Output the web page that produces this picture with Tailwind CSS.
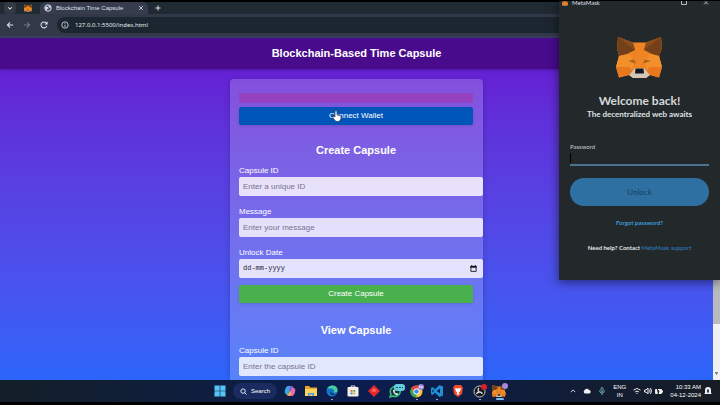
<!DOCTYPE html>
<html lang="en">
<head>
<meta charset="utf-8">
<title>Blockchain Time Capsule</title>
<script src="https://cdn.jsdelivr.net/npm/@tailwindcss/browser@4"></script>
</head>
<body class="relative flex h-screen flex-col overflow-hidden bg-black pt-0.5 pb-[3px] font-['Liberation_Sans',Arial,sans-serif] text-white">
<svg class="hidden" aria-hidden="true">
  <symbol id="fox" viewBox="0 0 47 43">
    <path fill="#ee8424" d="M2 1L17 6.500H30L45 1L46 12L43 20L46 31L43 41.500L34 39L30 42H17L13 39L3 41.500L0 31L3 20L1 12Z"/>
    <path fill="#74401a" d="M2 1L17 7L19 14L11 18L3 20L1 12ZM45 1L30 7L28 14L36 18L43 20L46 12Z"/>
    <path fill="#8d4c1b" d="M2 1L17 7L19 14ZM45 1L30 7L28 14Z"/>
    <path fill="#f4902c" d="M3 20L14 18L18 29L15 35L0 31ZM43 20L33 18L29 29L32 35L46 31Z"/>
    <path fill="#e8781e" d="M0 31L14 31L16 36L13 39L3 41.500ZM46 31L33 31L31 36L34 39L43 41.500Z"/>
    <path fill="#a9621f" d="M12 25L18 23.500L20 27.500ZM35 25L29 23.500L27 27.500Z"/>
    <path fill="#d5c5b5" d="M15 37L19 32H28L32 37L34 39L30 42H17L13 39Z"/>
    <path fill="#15171a" d="M19.500 32.500H27.500L28 37.500H19Z"/>
  </symbol>
</svg>

<header class="shrink-0 bg-[#1f2a33]">
  <div class="flex h-3 items-center">
    <button aria-label="Search tabs" class="ml-1 flex h-3 w-3 items-center justify-center rounded-sm bg-[#343946]"><svg class="h-1.5 w-1.5" viewBox="0 0 8 8" fill="none" stroke="#dfe3ea" stroke-width="1.400"><path d="M1.500 3L4 5.500L6.500 3"/></svg></button>
    <svg class="ml-2 h-2 w-2"><use href="#fox"/></svg>
    <div class="ml-2 flex h-full w-[108px] items-center rounded-t-md bg-[#363b4d] px-1">
      <svg class="h-2 w-2 shrink-0" viewBox="0 0 16 16"><circle cx="8" cy="8" r="6.500" fill="#4b5060" stroke="#d5d9e2" stroke-width="2"/><path fill="#d5d9e2" d="M2 5L8 6L9 9L6 10L6 14L3 11ZM9 2L14 6L11 8L9 5Z"/></svg>
      <span class="ml-1 flex-1 text-[6px] leading-[8px] whitespace-nowrap text-[#dfe2ea]">Blockchain Time Capsule</span>
      <button aria-label="Close tab" class="flex"><svg class="h-1.5 w-1.5" viewBox="0 0 8 8" stroke="#cfd3dc" stroke-width="1.200"><path d="M1.500 1.500L6.500 6.500M6.500 1.500L1.500 6.500"/></svg></button>
    </div>
    <button aria-label="New tab" class="ml-1.5 flex"><svg class="h-2 w-2" viewBox="0 0 8 8" stroke="#dfe3ea" stroke-width="1"><path d="M4 1.500V6.500M1.500 4H6.500"/></svg></button>
  </div>
  <div class="flex h-6 items-center gap-[9px] border-b-2 border-[#3b3d60] bg-[#333849] pl-1.5">
    <button aria-label="Back" class="flex"><svg class="h-2 w-2" viewBox="0 0 10 10" fill="none" stroke="#dfe3ea" stroke-width="1.300"><path d="M9 5H2M5 1.800L1.800 5L5 8.200"/></svg></button>
    <button aria-label="Forward" class="flex"><svg class="h-2 w-2" viewBox="0 0 10 10" fill="none" stroke="#767b8a" stroke-width="1.300"><path d="M1 5H8M5 1.800L8.200 5L5 8.200"/></svg></button>
    <button aria-label="Reload" class="flex"><svg class="h-2 w-2" viewBox="0 0 10 10" fill="none" stroke="#dfe3ea" stroke-width="1.300"><path d="M8.500 6A3.700 3.700 0 1 1 7.800 2.500L8.800 3.500M8.900 .8V3.700H6"/></svg></button>
    <div class="flex h-4 flex-1 items-center gap-1.5 rounded-l-full bg-[#1b2630] pl-1">
      <svg class="h-2 w-2" viewBox="0 0 10 10" fill="none" stroke="#dfe3ea"><circle cx="5" cy="5" r="4"/><path d="M5 4.500V7.500M5 2.500V3.500"/></svg>
      <input aria-label="Address" value="127.0.0.1:5500/index.html" class="w-48 bg-transparent font-['Noto_Sans',sans-serif] text-[6px] text-[#e4e7ed] outline-none">
    </div>
  </div>
</header>

<div class="flex min-h-0 flex-1">
  <div class="flex min-w-0 flex-1 flex-col overflow-hidden bg-linear-to-b from-[#6713d0] to-[#2b65fa]">
    <div class="flex h-[31px] shrink-0 items-center justify-center bg-[#470b8c] shadow-[0_1px_3px_#0004]">
      <h1 class="text-[11px] font-bold">Blockchain-Based Time Capsule</h1>
    </div>
    <main class="mx-auto mt-2.5 w-[253px] flex-1 shrink-0 rounded-t-sm bg-white/20 pt-3.5 pr-2.5 pl-[9px] shadow-[0_2px_6px_#0003]">
      <div class="h-2.5 bg-[#b02c9c]/45"></div>
      <button class="mt-1 block h-[18px] w-full rounded-xs bg-[#0056b8] text-[8px] shadow-sm">Connect Wallet</button>
      <form>
        <h2 class="mt-4 text-center text-[11px] leading-[18px] font-bold">Create Capsule</h2>
        <label for="cid" class="mt-1.5 block text-[8px] leading-3">Capsule ID</label>
        <input id="cid" placeholder="Enter a unique ID" class="block h-[19px] w-[calc(100%+10px)] rounded-xs bg-[#e7e1fc] px-1 text-[8px] text-black placeholder:text-[#77738a]">
        <label for="msg" class="mt-2.5 block text-[8px] leading-3">Message</label>
        <input id="msg" placeholder="Enter your message" class="block h-[19px] w-[calc(100%+10px)] rounded-xs bg-[#e5e1fc] px-1 text-[8px] text-black placeholder:text-[#77738a]">
        <label for="date" class="mt-2.5 block text-[8px] leading-3">Unlock Date</label>
        <div class="flex h-[19px] w-[calc(100%+10px)] items-center rounded-xs bg-[#e4e2fc] pr-1.5 pl-1">
          <input id="date" placeholder="dd-mm-yyyy" class="min-w-0 flex-1 bg-transparent font-['Liberation_Mono',monospace] text-[7px] text-black outline-none placeholder:text-[#25242c]">
          <button type="button" aria-label="Pick a date" class="flex"><svg class="h-[7px] w-[7px]" viewBox="0 0 8 8"><path fill="none" stroke="#15151c" d="M1 1.500H7V7.300H1Z"/><path fill="#15151c" d="M.5 1H7.500V3H.5ZM1.500 0H2.500V1H1.500ZM5.500 0H6.500V1H5.500Z"/></svg></button>
        </div>
        <button type="button" class="mt-[7px] block h-[18px] w-full rounded-xs bg-[#49b04e] text-[8px] shadow-sm">Create Capsule</button>
      </form>
      <form>
        <h2 class="mt-[18px] text-center text-[11px] leading-[18px] font-bold">View Capsule</h2>
        <label for="vid" class="mt-1.5 block text-[8px] leading-3">Capsule ID</label>
        <input id="vid" placeholder="Enter the capsule ID" class="block h-[19px] w-[calc(100%+10px)] rounded-xs bg-[#e1e7fd] px-1 text-[8px] text-black placeholder:text-[#77738a]">
      </form>
    </main>
  </div>
  <div class="flex w-[7px] flex-col bg-[#f1f1f3]">
    <div class="mt-24 h-[190px] bg-[#b9bac0]"></div>
    <svg class="mt-auto mb-1 h-1 w-full" viewBox="0 0 8 4"><path fill="#60636b" d="M2 0H6L4 3Z"/></svg>
  </div>
</div>

<footer class="grid h-[22px] shrink-0 grid-cols-[1fr_auto_1fr] items-center bg-linear-to-r from-[#141e28] via-[#0b1c50] to-[#161c24]">
  <div></div>
  <div class="flex items-center gap-[9px]">
    <button aria-label="Start" class="flex"><svg class="h-3 w-3" viewBox="0 0 12 12"><path fill="#55c5f5" d="M.5 .5H5.700V5.700H.5ZM6.300 .5H11.500V5.700H6.300ZM.5 6.300H5.700V11.500H.5ZM6.300 6.300H11.500V11.500H6.300Z"/></svg></button>
    <button class="-mx-0.5 flex h-4 w-11 items-center justify-center gap-1 rounded-full bg-[#1b2b60] text-[6px]"><svg class="h-[7px] w-[7px]" viewBox="0 0 8 8" fill="none" stroke="#fff"><circle cx="3.500" cy="3.500" r="2.500"/><path d="M5.500 5.500L7.500 7.500"/></svg>Search</button>
    <button aria-label="Copilot" class="flex"><svg class="h-3 w-3" viewBox="0 0 12 12"><path fill="#35a8e8" d="M4 1H7L5 8Q4 10 2 9Q0 8 1 5Q2 1 4 1Z"/><path fill="#e56bb0" d="M8 11H5L7 4Q8 2 10 3Q12 4 11 7Q10 11 8 11Z"/><path fill="#f4b64b" d="M2 9Q4 10 5 8L6 5L7.500 8L5.500 11Q3 11 2 9Z"/><path fill="#8d65e0" d="M7 1Q9 1 10 3Q8 2 7 4L6 6L5 3Z"/></svg></button>
    <button aria-label="File Explorer" class="flex"><svg class="h-3 w-3" viewBox="0 0 12 12"><path fill="#e5a52a" d="M0 1H4L5.500 2.500H12V5H0Z"/><path fill="#fbd45f" d="M0 4H12V11H0Z"/><path fill="#4a9bdc" d="M3 8H9V11H7.500V9.500H4.500V11H3Z"/></svg></button>
    <button aria-label="Edge" class="relative flex"><svg class="h-3 w-3" viewBox="0 0 12 12"><circle cx="6" cy="6" r="5.500" fill="#1677c8"/><path fill="#47cfa2" d="M1 4Q3 0 7 .5Q12 1 11.500 6Q11 8 8 7.500Q9 4 5.500 3.500Q3 3 1 4Z"/><path fill="#0b315f" d="M5 6Q5 9 10 9Q7 11 4.500 9Q3.500 7 5 6Z"/></svg><span class="absolute -bottom-[3px] left-[5px] h-px w-0.5 bg-[#9aa6c4]"></span></button>
    <button aria-label="Store" class="flex"><svg class="h-3 w-3" viewBox="0 0 12 12"><path fill="none" stroke="#dfe5ee" d="M4 3V1H8V3"/><rect x=".5" y="2" width="11" height="9.500" rx="1" fill="#f1f0e9"/><path fill="#e06b3b" d="M3.500 5H5.500V6.800H3.500Z"/><path fill="#66a744" d="M6.300 5H8.300V6.800H6.300Z"/><path fill="#3e86ce" d="M3.500 7.500H5.500V9.300H3.500Z"/><path fill="#dcae32" d="M6.300 7.500H8.300V9.300H6.300Z"/></svg></button>
    <button aria-label="Red diamond app" class="flex"><svg class="h-3 w-3" viewBox="0 0 12 12"><path fill="#e8282d" d="M6 0L12 6L6 12L0 6Z"/><path fill="#ff6462" d="M6 3L9 6L6 7L3 6Z"/></svg></button>
    <button aria-label="WhatsApp" class="flex"><svg class="h-3.5 w-4" viewBox="0 0 16 14"><path fill="#17323a" stroke="#35c47b" stroke-width="1.500" d="M6.500 2.500A5 5 0 1 1 4 12L1 13L2 10A5 5 0 0 1 6.500 2.500Z"/><path fill="#e6f5ee" d="M4 6L5.500 5.500L6 7L5.500 8L7 9.500L8 9L9.500 10Q8.500 11.500 7 11Q4 9.500 4 6Z"/><rect x="5" width="11" height="7" rx="3" fill="#65ccdc"/><path stroke="#14536e" d="M7 3.500H9M10 3.500H12M13 3.500H14"/></svg></button>
    <button aria-label="Chrome" class="relative -ml-1 flex"><svg class="h-3.5 w-3.5" viewBox="0 0 14 14"><circle cx="6.500" cy="7.500" r="6" fill="#f3c739"/><path fill="#e2463a" d="M1.300 4.500A6 6 0 0 1 11.700 4.500H6.500L4 9Z"/><path fill="#35a853" d="M1.300 4.500L4 9L6.500 10.500V13.500A6 6 0 0 1 1.300 4.500Z"/><circle cx="6.500" cy="7.500" r="2.700" fill="#4285f4" stroke="#fff"/><circle cx="11" cy="3" r="3" fill="#a987d9"/><path stroke="#fff" d="M9.800 2V4M12 2V4"/></svg><span class="absolute -bottom-0.5 left-1.5 h-px w-0.5 bg-[#9aa6c4]"></span></button>
    <button aria-label="Visual Studio Code" class="relative -ml-0.5 flex"><svg class="h-3 w-3" viewBox="0 0 12 12"><path fill="#1f8fd8" fill-rule="evenodd" d="M8.500 0L12 1.500V10.500L8.500 12L4 7.800L1.500 10L0 9V3L1.500 2L4 4.200ZM9 3.500L5.700 6L9 8.500ZM1.300 4.500V7.500L3 6Z"/></svg><span class="absolute -bottom-[3px] left-[5px] h-px w-0.5 bg-[#9aa6c4]"></span></button>
    <button aria-label="Brave" class="flex"><svg class="h-3 w-3" viewBox="0 0 12 12"><path fill="#ee4b2b" d="M3 0H9L11 2.500L10 9L6 12L2 9L1 2.500Z"/><path fill="#fff" d="M3 3L6 3.500L9 3L8 6.500L6.700 7.500L7.500 9L6 10L4.500 9L5.300 7.500L4 6.500Z"/></svg></button>
    <button aria-label="OBS Studio" class="relative flex"><svg class="h-3.5 w-3.5" viewBox="0 0 14 14"><circle cx="6.500" cy="7.500" r="5.500" fill="#15171b" stroke="#c9cbd1"/><path fill="none" stroke="#d9dbe0" stroke-width="1.300" d="M6 4Q4 6 6.500 8Q9 8 9 10M6.500 8Q4 8 3.500 10"/><circle cx="11" cy="3" r="3" fill="#d9202e"/></svg><span class="absolute -bottom-0.5 left-1.5 h-px w-0.5 bg-[#9aa6c4]"></span></button>
    <button aria-label="MetaMask" class="relative -ml-1 flex"><svg class="h-3.5 w-3.5"><use href="#fox"/></svg><span class="absolute -top-px -right-0.5 h-1.5 w-1.5 rounded-full bg-[#a987d9]"></span><span class="absolute -bottom-0.5 left-1 h-0.5 w-2 rounded-full bg-[#7fb8ea]"></span></button>
  </div>
  <div class="flex items-center justify-end gap-[7px] pr-2 text-[6px] leading-[8px]">
    <svg class="h-1.5 w-1.5" viewBox="0 0 8 8" fill="none" stroke="#e4e6ea" stroke-width="1.200"><path d="M1 5.500L4 2.500L7 5.500"/></svg>
    <svg class="h-2 w-2" viewBox="0 0 8 8"><path fill="#f0f1f3" d="M2 6.500A1.800 1.800 0 0 1 1.500 3.300A2.500 2.500 0 0 1 6 3A1.800 1.800 0 0 1 6.500 6.500Z"/></svg>
    <svg class="h-2 w-2" viewBox="0 0 8 8" fill="none" stroke="#68aaa4"><rect x="3" y=".5" width="2" height="4" rx="1"/><path d="M1.500 3.500Q1.500 6 4 6Q6.500 6 6.500 3.500M4 6V8"/></svg>
    <div class="text-center">ENG<br>IN</div>
    <div class="flex items-center gap-[3px]">
      <svg class="h-2 w-2" viewBox="0 0 8 8" fill="none" stroke="#e4e6ea"><path d="M.5 3Q4 0 7.500 3M2 5Q4 3.300 6 5M3.500 6.500H4.500"/></svg>
      <svg class="h-2 w-2" viewBox="0 0 8 8" fill="none" stroke="#e4e6ea"><path d="M.5 3H2L4 1V7L2 5H.5ZM5.500 2.500Q6.500 4 5.500 5.500M6.500 1Q8.500 4 6.500 7"/></svg>
      <svg class="h-2 w-2" viewBox="0 0 8 8"><rect x="0" y="2" width="7" height="5" rx="1" fill="#eceef1"/><path fill="#eceef1" d="M7 3.500H8V5.500H7Z"/><path stroke="#222" d="M2 2L4 4L3 7"/></svg>
    </div>
    <div class="text-right whitespace-nowrap">10:33 AM<br>04-12-2024</div>
    <svg class="-ml-1 h-2 w-2" viewBox="0 0 8 8"><path fill="#eceef1" d="M1 6V3A3 3 0 0 1 7 3V6L8 7H0Z"/><path stroke="#20262e" d="M3 3H5L3 5H5"/></svg>
  </div>
</footer>

<svg class="absolute top-[110px] left-[332px] h-3 w-2.5" viewBox="0 0 10 12" aria-hidden="true"><path fill="#fff" stroke="#29375b" stroke-width=".7" d="M3 1Q4 0 5 1V5L9 6V9L7 11.500H4L1 8V6L3 7Z"/></svg>

<aside class="absolute top-0 right-0 flex h-[280px] w-[161px] flex-col items-center bg-[#23282b] px-[11px] font-['Lato',sans-serif] shadow-[0_2px_10px_#0008]">
  <div class="flex h-1.5 w-full shrink-0 items-center gap-1 text-[6px] leading-[6px] text-[#dadde0]">
    <svg class="-ml-2 h-1.5 w-1.5 shrink-0"><use href="#fox"/></svg><span class="flex-1">MetaMask</span>
    <svg class="mr-3 h-1 w-1.5" viewBox="0 0 6 4" fill="none" stroke="#b8bcc0"><path d="M.5 0V3.500H5.500V0"/></svg>
    <svg class="h-1 w-1.5" viewBox="0 0 6 4" stroke="#b8bcc0"><path d="M1 3.500L4 .5M5 3.500L2 .5"/></svg>
  </div>
  <svg class="mt-[30px] h-[43px] w-[47px] shrink-0"><use href="#fox"/></svg>
  <h2 class="mt-3.5 text-xs leading-4 font-bold whitespace-nowrap text-[#d5d9dc]">Welcome back!</h2>
  <p class="text-[8px] leading-[10px] font-bold whitespace-nowrap text-[#dfe2e4]">The decentralized web awaits</p>
  <form class="flex w-full flex-col">
    <label for="pw" class="mt-6 text-[6px] leading-[8px] text-[#c9cdd0]">Password</label>
    <div class="flex h-[15px] items-center border-b-2 border-[#4a7390]">
      <span class="h-2.5 w-px bg-black"></span>
      <input id="pw" type="password" class="min-w-0 flex-1 bg-transparent text-[8px] outline-none">
    </div>
    <button type="button" class="mt-3 h-7 w-full rounded-full bg-[#2f70a3] text-[8px] text-[#183e60]">Unlock</button>
  </form>
  <a href="#forgot" class="mt-3 text-[6px] leading-[10px] font-bold whitespace-nowrap text-[#3c9bd8]">Forgot password?</a>
  <p class="mt-4 text-[6px] leading-[8px] font-bold whitespace-nowrap text-[#e4e6e8]">Need help? Contact <a href="#support" class="font-normal text-[#2f82c4]">MetaMask support</a></p>
</aside>
<div class="absolute inset-x-0 top-0 h-px bg-black"></div>
</body>
</html>
